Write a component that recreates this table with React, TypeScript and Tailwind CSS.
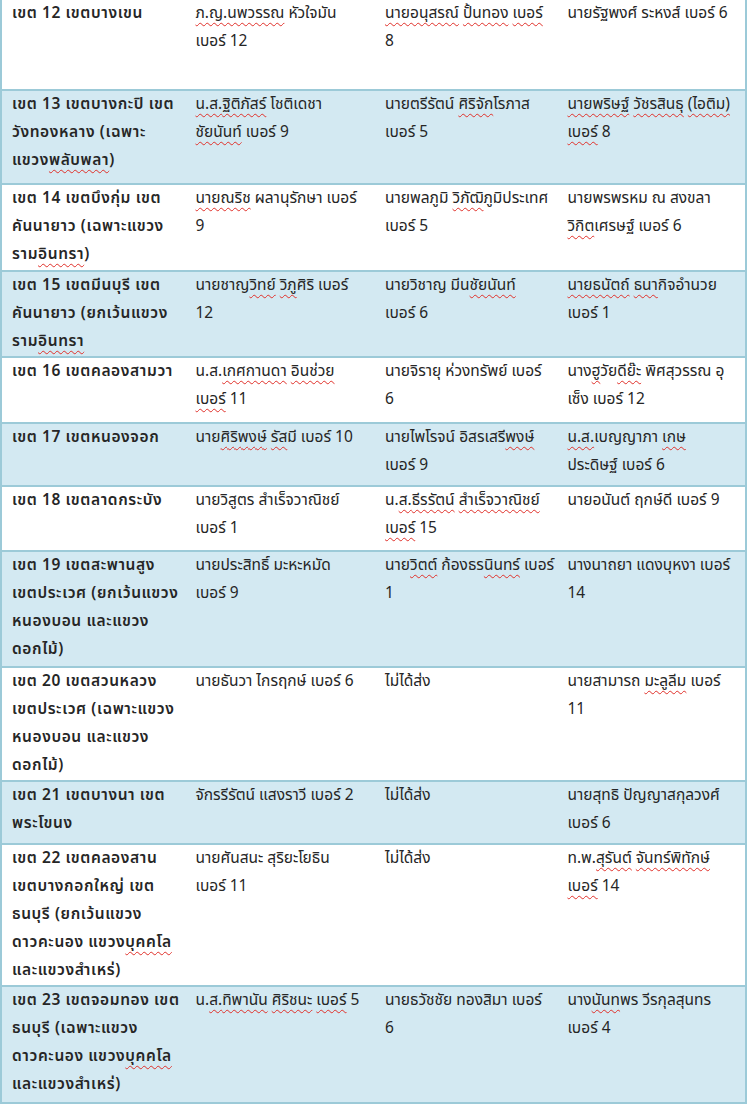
type Cell = string[];
type Row = { h: number; cells: [Cell, Cell, Cell, Cell] };

// ~word~ marks a spell-check underline
const rows: Row[] = [
  { h: 90, cells: [["เขต 12 เขตบางเขน"], ["~ภ.ญ.นพวรรณ~ หัวใจมัน", "เบอร์ 12"], ["~นายอนุสรณ์~ ~ปั้นทอง~ ~เบอร์~", "8"], ["นายรัฐพงศ์ ระหงส์ เบอร์ 6"]] },
  { h: 94, cells: [["เขต 13 เขตบางกะปิ เขต", "วังทองหลาง (เฉพาะ", "แขวง~พลับพลา~)"], ["~น.ส.~~ฐิติภัสร์~ โชติเดชา", "~ชัยนันท์~ เบอร์ 9"], ["นายตรีรัตน์ ~ศิริจัก~โรภาส", "เบอร์ 5"], ["~นายพริษฐ์~ ~วัชรสินธุ~ ~(ไอติม)~", "~เบอร์~ 8"]] },
  { h: 87, cells: [["เขต 14 เขตบึงกุ่ม เขต", "คันนายาว (เฉพาะแขวง", "ราม~อินทรา~)"], ["~นายณริช~ ผลานุรักษา เบอร์", "9"], ["นายพลภูมิ ~วิภัฒิ~ภูมิประเทศ", "เบอร์ 5"], ["นายพรพรหม ณ สงขลา", "~วิกิต~เศรษฐ์ เบอร์ 6"]] },
  { h: 86, cells: [["เขต 15 เขตมีนบุรี เขต", "คันนายาว (ยกเว้นแขวง", "ราม~อินทรา~"], ["นายชาญ~วิทย์~ ~วิภู~ศิริ เบอร์", "12"], ["นายวิชาญ มีน~ชัยนันท์~", "เบอร์ 6"], ["~นายธนัตถ์~ ~ธนา~กิจอำนวย", "เบอร์ 1"]] },
  { h: 66, cells: [["เขต 16 เขตคลองสามวา"], ["น.ส.~เกศกานดา~ ~อินช่วย~", "~เบอร์~ 11"], ["นายจิรายุ ห่วงทรัพย์ เบอร์", "6"], ["นาง~ฮู~วัย~ดีย๊ะ~ พิศสุวรรณ อุ", "เซ็ง เบอร์ 12"]] },
  { h: 63, cells: [["เขต 17 เขตหนองจอก"], ["นาย~ศิริพงษ์~ ~รัส~มี เบอร์ 10"], ["นายไพโรจน์ อิสรเสรี~พงษ์~", "เบอร์ 9"], ["~น.ส.~เบญญาภา ~เกษ~", "ประดิษฐ์ เบอร์ 6"]] },
  { h: 65, cells: [["เขต 18 เขตลาดกระบัง"], ["นายวิสูตร สำเร็จวาณิชย์", "เบอร์ 1"], ["น.~ส.~~ธีรรัตน์~ ~สำเร็จวาณิชย์~", "~เบอร์~ 15"], ["นายอนันต์ ฤกษ์ดี เบอร์ 9"]] },
  { h: 116, cells: [["เขต 19 เขตสะพานสูง", "เขตประเวศ (ยกเว้นแขวง", "หนองบอน และแขวง", "ดอกไม้)"], ["นายประสิทธิ์ มะหะหมัด", "เบอร์ 9"], ["นาย~วิตต์~ ก้องธร~นินทร์~ เบอร์", "1"], ["นางนาถยา แดงบุหงา เบอร์", "14"]] },
  { h: 114, cells: [["เขต 20 เขตสวนหลวง", "เขตประเวศ (เฉพาะแขวง", "หนองบอน และแขวง", "ดอกไม้)"], ["นายธันวา ไกรฤกษ์ เบอร์ 6"], ["ไม่ได้ส่ง"], ["นายสามารถ ~มะลูลีม~ เบอร์", "11"]] },
  { h: 63, cells: [["เขต 21 เขตบางนา เขต", "พระโขนง"], ["จักรรีรัตน์ แสงราวี เบอร์ 2"], ["ไม่ได้ส่ง"], ["นายสุทธิ ปัญญาสกุลวงศ์", "เบอร์ 6"]] },
  { h: 142, cells: [["เขต 22 เขตคลองสาน", "เขตบางกอกใหญ่ เขต", "ธนบุรี (ยกเว้นแขวง", "ดาวคะนอง แขวง~บุคคโล~", "และแขวงสำเหร่)"], ["นายศันสนะ สุริยะโยธิน", "เบอร์ 11"], ["ไม่ได้ส่ง"], ["ท.พ.~สุรันต์~ ~จันทร์พิทักษ์~", "~เบอร์~ 14"]] },
  { h: 117, cells: [["เขต 23 เขตจอมทอง เขต", "ธนบุรี (เฉพาะแขวง", "ดาวคะนอง แขวง~บุคคโล~", "และแขวงสำเหร่)"], ["น.~ส.~~ทิพานัน~ ~ศิริชนะ~ ~เบอร์~ 5"], ["นายธวัชชัย ทองสิมา เบอร์", "6"], ["นาง~นันท~พร วีรกุลสุนทร", "เบอร์ 4"]] },
];

function Line({ text }: { text: string }) {
  const parts = text.split("~");
  return (
    <div className="whitespace-nowrap">
      {parts.map((p, i) =>
        i % 2 === 1 ? (
          <span key={i} className="underline decoration-wavy decoration-[#e0302a] decoration-1 underline-offset-[4px]">{p}</span>
        ) : (
          <span key={i}>{p}</span>
        )
      )}
    </div>
  );
}

export default function App() {
  return (
    <div className="min-h-[1107px] w-[750px] bg-white font-['Tahoma','Noto_Sans_Thai','Noto_Sans','DejaVu_Sans',sans-serif] text-[15.5px] leading-[28px] text-[#262626]">
      <table className="w-[747px] table-fixed border-collapse border-x-2 border-b-2 border-[#9ccad8]">
        <colgroup>
          <col className="w-[184px]" />
          <col className="w-[189px]" />
          <col className="w-[182px]" />
          <col className="w-[188px]" />
        </colgroup>
        <tbody>
          {rows.map((row, r) => (
            <tr key={r} style={{ height: row.h }} className={`border-b-2 border-[#9ccad8] ${r % 2 === 1 ? "bg-[#d3e9f2]" : "bg-white"}`}>
              {row.cells.map((cell, c) => (
                <td key={c} className={`px-[10px] pt-0 align-top ${c === 0 ? "text-[15.5px] font-semibold tracking-[0.6px]" : ""}`}>
                  {cell.map((line, l) => (
                    <Line key={l} text={line} />
                  ))}
                </td>
              ))}
            </tr>
          ))}
        </tbody>
      </table>
    </div>
  );
}
